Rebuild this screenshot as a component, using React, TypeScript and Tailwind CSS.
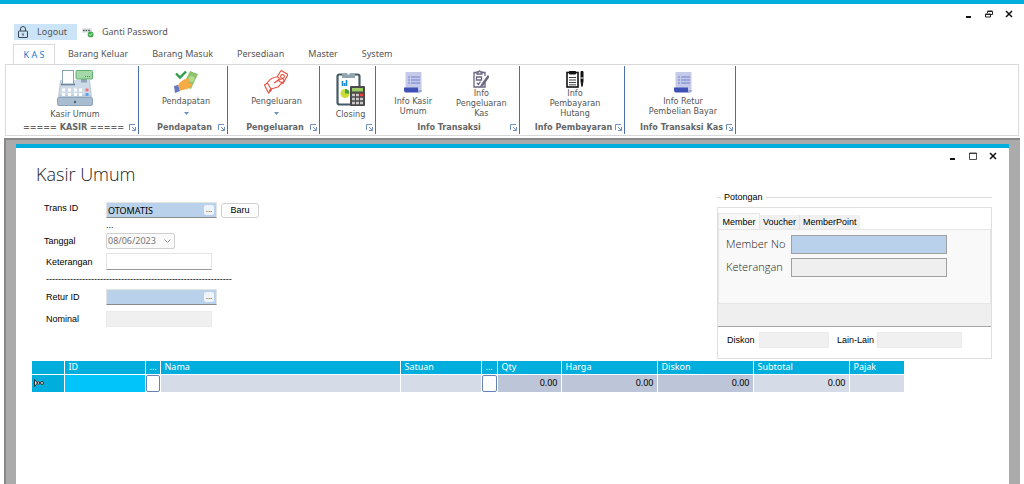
import type { ReactNode } from 'react';

const Lock = () => (
  <svg className="h-3 w-2.5" viewBox="0 0 10 12" fill="none" stroke="#3a4652">
    <path d="M2.5 5V3a2.5 2.5 0 0 1 5 0v2" />
    <rect x="0.5" y="5" width="9" height="6.5" rx="0.5" />
    <path d="M5 7.5v2" strokeWidth="1.4" />
  </svg>
);

const PasswordKey = () => (
  <svg className="h-3 w-3" viewBox="0 0 12 12">
    <rect x="0" y="2" width="10" height="5" fill="#e6e8ea" />
    <path d="M1 4.5h8" stroke="#4a4f55" strokeWidth="1.4" strokeDasharray="1.6 1" />
    <circle cx="8.6" cy="8.4" r="2.9" fill="#3faa4d" />
    <path d="m7.2 8.4 1 1 1.8-2" stroke="#fff" fill="none" strokeWidth="0.9" />
  </svg>
);

const Register = () => (
  <svg className="h-9 w-9" viewBox="0 0 36 36">
    <path d="M3 10h30l2 17H1z" fill="#b9cadb" />
    <path d="M4 10h28l1.5 15H2.5z" fill="#cddbe8" />
    <rect x="0.5" y="27.5" width="35" height="8" rx="1.5" fill="#a9bdd1" stroke="#8ea5bb" />
    <circle cx="18" cy="32" r="1.2" fill="#4d6278" />
    <rect x="24" y="9" width="6" height="3.5" fill="#8fa6bc" />
    <rect x="19" y="0.5" width="16.5" height="8.5" rx="1" fill="#a5d8a8" stroke="#5fae70" />
    <path d="M28 6.5h5" stroke="#4d8c5a" strokeDasharray="1 1" />
    <path d="M4 14.5h14" stroke="#5b7289" strokeWidth="1.6" />
    <rect x="5.5" y="0.5" width="11" height="13.5" fill="#fff" stroke="#8ba2b8" />
    <path d="M5 20h3M11 20h3M17 20h3M22 20h3M5 24.5h3M11 24.5h3M17 24.5h3M22 24.5h3" stroke="#fff" strokeWidth="2.8" />
    <path d="M28.5 20h3" stroke="#f07575" strokeWidth="2.8" />
    <path d="M28.5 24.5h3" stroke="#5a9be8" strokeWidth="2.8" />
  </svg>
);

const HandMoney = () => (
  <svg className="h-6 w-6" viewBox="0 0 24 24">
    <path d="m16 1 8 3-7 15-8-4z" fill="#8cc36c" />
    <circle cx="17.5" cy="9" r="3" fill="#b4dc8e" />
    <path d="M4 15.5c2-4 5-6 9-7 3 0 3 2 1 4l4 1c1 2-3 6-7 6l-5 1z" fill="#f7ab45" />
    <path d="m0 16 4-1 2 6-5 2z" fill="#6777c4" />
    <path d="m2 3.500 4 4 6-6" fill="none" stroke="#2fa04a" strokeWidth="2.4" />
  </svg>
);

const HandOutline = () => (
  <svg className="h-6 w-6" viewBox="0 0 24 24" fill="none" stroke="#e8503f" strokeWidth="1.1">
    <path d="m17 0.500 7 4-5 9-4-2.500M17 0.500l-4 6.500" />
    <circle cx="18.5" cy="6.500" r="1.9" />
    <path d="M3 13c3-4 6-6 10-6 3 0 3 2 0 4l-3 2M10 13l6-3.500c3-2 5 0 3 2.500l-5 5-7 2-2 2M0.500 15l3-2 4 7-3 3z" />
  </svg>
);

const Closing = () => (
  <svg className="h-9 w-[30px]" viewBox="0 0 30 36">
    <rect x="1.5" y="4.5" width="22" height="30" rx="2" fill="#fff" stroke="#455a64" strokeWidth="2.2" />
    <path d="M6 4h4a3 3 0 0 1 5 0h4v4H6z" fill="#90a4ae" />
    <circle cx="12.5" cy="3.5" r="1.2" fill="#fff" />
    <path d="M6.5 11v5M8.500 13v3M10.500 10v6" stroke="#1e88d2" strokeWidth="1.6" />
    <circle cx="9" cy="23.5" r="4.5" fill="#cddc39" />
    <path d="M9 23.5V19a4.5 4.5 0 0 1 4.5 4.5z" fill="#43a047" />
    <rect x="14" y="16" width="15" height="20" rx="1" fill="#4a4a4a" />
    <rect x="16" y="18" width="11" height="3.5" fill="#9ccc65" />
    <path d="M16 25h3M20 25h3M16 29h3M20 29h3M24 29h3M16 33h3M20 33h3M24 33h3" stroke="#c8c8c8" strokeWidth="2.4" />
    <path d="M24 25h3" stroke="#f44336" strokeWidth="2.4" />
  </svg>
);

const Scroll = () => (
  <svg className="h-[21px] w-[18px]" viewBox="0 0 18 21">
    <path d="M1.5 0h16v18h-16z" fill="#c5cae9" />
    <path d="M0 15.5h14v3q0 2 3 2H2q-2 0-2-2z" fill="#3f51b5" />
    <path d="M14 18h4q0 2.5-2 2.5t-2-2.5z" fill="#9fa8da" />
    <path d="M4 5h2M4 8h2M4 11h2M7 5h9M7 8h9M7 11h9" stroke="#7080d0" strokeWidth="1.2" />
  </svg>
);

const ClipboardEdit = () => (
  <svg className="h-[18px] w-4" viewBox="0 0 16 18" fill="none" stroke="#6a6580" strokeWidth="1.3">
    <path d="M4 2.5H1V17h11v-5M12 6V2.5H9" />
    <path d="M4 4V2h1.5q1-2 2 0H9v2z" fill="#fff" />
    <path d="M3.500 7h5v3h-5zM4 13l1.500 1.500 2-3" />
    <path d="m15 6-6 8-1 2 2-1 5.500-8z" fill="#fff" />
  </svg>
);

const ClipboardPen = () => (
  <svg className="h-[18px] w-[18px]" viewBox="0 0 18 18" fill="none" stroke="#111">
    <rect x="1" y="2.5" width="11" height="14.5" strokeWidth="1.6" />
    <path d="M3.5 1.500h6v2.500h-6z" fill="#111" />
    <path d="M3 7.500h7M3 10h7M3 12.500h7M3 14.800h7" strokeWidth="0.8" />
    <path d="M15 1.500h2v10l-1 5-1-5z" fill="#111" />
    <path d="M14.500 8h3" stroke="#fff" />
  </svg>
);

const Launcher = () => (
  <svg className="h-[7px] w-[7px]" viewBox="0 0 7 7" fill="none" stroke="#6f8fc2">
    <path d="M0.5 6V0.5H6" />
    <path d="M6.5 3v3.5H3M3 3l3 3" />
  </svg>
);

type Item = { icon: ReactNode; lines: string[]; drop?: boolean; place: string };
type Group = { label: string; width: string; items: Item[] };

const groups: Group[] = [
  { label: '===== KASIR =====', width: 'w-[133px]', items: [{ icon: <Register />, lines: ['Kasir Umum'], place: 'pt-1 gap-[3px]' }] },
  { label: 'Pendapatan', width: 'w-[89px]', items: [{ icon: <HandMoney />, lines: ['Pendapatan'], drop: true, place: 'pt-1 gap-0.5' }] },
  { label: 'Pengeluaran', width: 'w-[92px]', items: [{ icon: <HandOutline />, lines: ['Pengeluaran'], drop: true, place: 'pt-1 gap-0.5' }] },
  { label: '', width: 'w-14', items: [{ icon: <Closing />, lines: ['Closing'], place: 'pt-1 gap-[3px]' }] },
  {
    label: 'Info Transaksi',
    width: 'w-36',
    items: [
      { icon: <Scroll />, lines: ['Info Kasir', 'Umum'], place: 'pt-1.5 gap-[3px]' },
      { icon: <ClipboardEdit />, lines: ['Info', 'Pengeluaran', 'Kas'], place: 'pt-1' },
    ],
  },
  { label: 'Info Pembayaran', width: 'w-[105px]', items: [{ icon: <ClipboardPen />, lines: ['Info', 'Pembayaran', 'Hutang'], place: 'pt-1' }] },
  { label: 'Info Transaksi Kas', width: 'w-[111px]', items: [{ icon: <Scroll />, lines: ['Info Retur', 'Pembelian Bayar'], place: 'pt-1.5 gap-[3px]' }] },
];

const RibbonGroup = ({ label, width, items }: Group) => (
  <section className={`flex h-[68px] shrink-0 flex-col border-r border-[#4a6ea9] pb-px ${width}`}>
    <div className="flex h-[55px] justify-center gap-6 pl-1.5">
      {items.map((item) => (
        <button key={item.lines.join(' ')} type="button" className={`flex flex-col items-center leading-[10px] ${item.place}`}>
          {item.icon}
          <span className="flex flex-col whitespace-nowrap">
            {item.lines.map((line) => (
              <span key={line}>{line}</span>
            ))}
          </span>
          {item.drop && (
            <svg className="mt-1 h-[3px] w-[5px]" viewBox="0 0 5 3">
              <path d="M0 0h5L2.5 3z" fill="#6f8fc2" />
            </svg>
          )}
        </button>
      ))}
    </div>
    <div className="flex h-3 items-center pr-0.5">
      <h2 className="flex-1 pl-3 text-center font-bold whitespace-nowrap text-[#666]">{label}</h2>
      <button type="button" aria-label={`${label} options`}>
        <Launcher />
      </button>
    </div>
  </section>
);

const WindowButtons = ({ restored }: { restored?: boolean }) => (
  <div className="flex gap-3">
    <button type="button" aria-label="Minimize">
      <svg className="h-2 w-2" viewBox="0 0 8 8">
        <path d="M1 7h5" stroke="#111" strokeWidth="2" />
      </svg>
    </button>
    <button type="button" aria-label="Maximize">
      <svg className="h-2 w-2" viewBox="0 0 8 8" fill="none" stroke="#222">
        {restored ? (
          <path d="M2.5 3V1.5h5v3H6M0.5 4h5v3h-5zM0.5 4.500h5M2.500 1h5" />
        ) : (
          <path d="M0.5 1h7v6.5h-7zM0.5 1.5h7" strokeWidth="0.8" />
        )}
      </svg>
    </button>
    <button type="button" aria-label="Close">
      <svg className="h-2 w-2" viewBox="0 0 8 8">
        <path d="m1 1 6 6M7 1 1 7" stroke="#111" strokeWidth="1.5" />
      </svg>
    </button>
  </div>
);

const LookupField = ({ id, value }: { id: string; value: string }) => (
  <div className="flex h-4 w-[111px] items-center border border-b-[#8a8a8a] border-[#e4e4e4] bg-[#b9d1ea] pr-0.5">
    <input id={id} defaultValue={value} className="h-full w-0 flex-1 bg-transparent px-px font-['Noto_Sans',sans-serif]" />
    <button type="button" aria-label="Browse" className="h-2.5 w-2.5 rounded-xs bg-[#eef4fb] text-[8px] leading-[6px]">
      ...
    </button>
  </div>
);

const columns = [
  { title: '', width: 'w-8', value: '', cell: 'bg-[#00aede]' },
  { title: 'ID', width: 'w-[81px]', value: '', cell: 'bg-[#00c4fa]' },
  { title: '...', width: 'w-[15px]', value: 'check', cell: 'bg-white' },
  { title: 'Nama', width: 'w-60', value: '', cell: 'bg-[#d5dbe7]' },
  { title: 'Satuan', width: 'w-[81px]', value: '', cell: 'bg-[#d5dbe7]' },
  { title: '...', width: 'w-4', value: 'check', cell: 'bg-white' },
  { title: 'Qty', width: 'w-16', value: '0.00', cell: 'bg-[#bdc6d9]' },
  { title: 'Harga', width: 'w-24', value: '0.00', cell: 'bg-[#bdc6d9]' },
  { title: 'Diskon', width: 'w-24', value: '0.00', cell: 'bg-[#bdc6d9]' },
  { title: 'Subtotal', width: 'w-24', value: '0.00', cell: 'bg-[#d5dbe7]' },
  { title: 'Pajak', width: 'w-[55px]', value: '', cell: 'bg-[#d5dbe7]' },
];

const ItemTable = () => (
  <table className="w-[872px] table-fixed border-collapse font-['Noto_Sans',sans-serif] text-[9px]">
    <thead>
      <tr className="h-[13px] bg-[#00aede] text-left text-white">
        {columns.map((col, i) => (
          <th key={i} className={`overflow-hidden border-r border-b border-white p-0 pl-1 leading-3 font-normal last:border-r-0 ${col.width}`}>
            {col.title}
          </th>
        ))}
      </tr>
    </thead>
    <tbody>
      <tr className="h-[18px] text-right text-black">
        {columns.map((col, i) => (
          <td key={i} className={`border-r border-white p-0 leading-4 last:border-r-0 ${col.cell}`}>
            {i === 0 && (
              <svg className="ml-0.5 h-2 w-2.5" viewBox="0 0 10 8" fill="#ddd" stroke="#333">
                <path d="M0.5 0.500v7L3.500 4z" />
                <circle cx="4.5" cy="4" r="1.2" />
                <circle cx="8" cy="4" r="1.5" />
              </svg>
            )}
            {col.value === 'check' && (
              <input type="checkbox" aria-label="Pilih" className="block h-[17px] w-full appearance-none rounded-xs border border-[#6580b5] bg-white" />
            )}
            {col.value === '0.00' && <span className="pr-[3px]">{col.value}</span>}
          </td>
        ))}
      </tr>
    </tbody>
  </table>
);

const Potongan = () => (
  <fieldset className="w-[275px] shrink-0">
    <legend className="flex w-full items-center gap-[3px] leading-3">
      <span className="w-1 border-t border-[#dcdcdc]" />
      Potongan
      <span className="flex-1 border-t border-[#dcdcdc]" />
    </legend>
    <div className="mt-1 border border-[#dfdfdf]">
      <div className="border-b border-[#a5a5a5] pt-[5px]">
        <div role="tablist" className="flex items-end">
          <button type="button" role="tab" aria-selected="true" className="h-4 w-[42px] border border-b-0 border-[#e6e6e6] bg-[#f9f9f9]">
            Member
          </button>
          <button type="button" role="tab" aria-selected="false" className="h-3.5 w-10 border-r border-[#e2e2e2] bg-[#f0f0f0]">
            Voucher
          </button>
          <button type="button" role="tab" aria-selected="false" className="h-3.5 bg-[#f0f0f0] px-[3px]">
            MemberPoint
          </button>
        </div>
        <div role="tabpanel" className="grid h-[75px] grid-cols-[65px_156px] content-start gap-y-1 border border-[#e6e6e6] bg-[#f9f9f9] pt-[5px] pl-[7px] font-['Open_Sans',sans-serif] text-[11px] font-light text-[#222]">
          <label htmlFor="member-no" className="leading-[18px]">Member No</label>
          <input id="member-no" className="h-[19px] border border-[#a0a0a0] bg-[#b9d1ea]" />
          <label htmlFor="member-ket" className="leading-[18px]">Keterangan</label>
          <input id="member-ket" readOnly className="h-[19px] border border-[#a0a0a0] bg-[#efefef]" />
        </div>
        <div className="h-[22px] bg-[#efefef]" />
      </div>
      <div className="flex items-center pt-[5px] pb-2.5 pl-[9px] whitespace-nowrap">
        <label htmlFor="diskon" className="w-8">Diskon</label>
        <input id="diskon" readOnly className="h-4 w-[70px] border border-[#ebebeb] bg-[#f0f0f0]" />
        <label htmlFor="lain" className="ml-2 w-10">Lain-Lain</label>
        <input id="lain" readOnly className="h-4 w-[85px] border border-[#ebebeb] bg-[#f0f0f0]" />
      </div>
    </div>
  </fieldset>
);

const App = () => {
  return (
    <div className="flex min-h-screen flex-col border-t-4 border-[#00aede] bg-white font-['DejaVu_Sans_Condensed','DejaVu_Sans',sans-serif] text-[9px] leading-3 text-[#555]">
      <header className="px-[5px]">
        <div className="flex h-5 items-center justify-end pr-1.5">
          <WindowButtons restored />
        </div>
        <div className="flex gap-[5px] pl-[9px] font-['Noto_Sans',sans-serif]">
          <button type="button" className="flex h-4 w-[63px] items-center gap-[9px] bg-[#cce4f7] pl-1">
            <Lock />
            Logout
          </button>
          <button type="button" className="flex h-4 items-center gap-2">
            <PasswordKey />
            Ganti Password
          </button>
        </div>
        <nav className="mt-1 flex h-5 items-center pl-2 font-['Noto_Sans',sans-serif]">
          <a href="#kas" className="flex h-full w-[42px] items-center justify-center border border-b-0 border-[#d9d9d9] text-[#1979ca]">K A S</a>
          <div className="flex gap-6 pl-[13px]">
            <a href="#barang-keluar">Barang Keluar</a>
            <a href="#barang-masuk">Barang Masuk</a>
            <a href="#persediaan">Persediaan</a>
            <a href="#master">Master</a>
            <a href="#system">System</a>
          </div>
        </nav>
        <div className="flex h-[72px] border border-[#d9d9d9] pt-px">
          {groups.map((group) => (
            <RibbonGroup key={group.width} {...group} />
          ))}
        </div>
      </header>

      <main className="mx-1 mt-0.5 flex flex-1 flex-col border-t-2 border-l-2 border-[#888] bg-[#ababab] pt-1 pr-[11px] pl-2.5">
        <div className="flex flex-1 flex-col border-t-4 border-[#00aede] bg-white pl-4 font-['Liberation_Sans',Arial,sans-serif] text-[9px] text-black">
          <div className="flex h-[38px] items-start justify-between pt-1 pr-3 pl-1">
            <h1 className="pt-2.5 font-['Open_Sans',sans-serif] text-[18px] leading-6 font-light text-[#222]">Kasir Umum</h1>
            <WindowButtons />
          </div>
          <div className="flex items-start justify-between pt-[5px] pr-[17px]">
            <form className="grid grid-cols-[62px_auto] items-center pt-[11px] pl-3">
              <label htmlFor="trans-id" className="self-start">Trans ID</label>
              <div className="flex items-center gap-1">
                <LookupField id="trans-id" value="OTOMATIS" />
                <button type="button" className="h-[15px] w-[38px] rounded-[3px] border border-[#d0d0d0] bg-[#fdfdfd] leading-3">
                  Baru
                </button>
              </div>
              <span className="col-start-2 h-[15px] leading-[15px]">...</span>
              <label htmlFor="tanggal">Tanggal</label>
              <div className="grid w-[69px] items-center">
                <select id="tanggal" disabled className="col-start-1 row-start-1 h-4 appearance-none rounded-xs border border-[#cfcfcf] bg-[#fafafa] pl-px font-['Noto_Sans',sans-serif] text-[9px] text-[#777]">
                  <option>08/06/2023</option>
                </select>
                <svg className="col-start-1 row-start-1 mr-1 h-1 w-[7px] justify-self-end" viewBox="0 0 7 4" fill="none" stroke="#999">
                  <path d="m0.5 0.5 3 3 3-3" />
                </svg>
              </div>
              <label htmlFor="keterangan" className="mt-1 pl-0.5">Keterangan</label>
              <input id="keterangan" className="mt-1 h-[17px] w-[106px] border border-b-[#999] border-[#e4e4e4]" />
              <p className="col-span-2 h-[19px] pl-0.5 leading-[19px]">{'-'.repeat(62)}</p>
              <label htmlFor="retur-id" className="pl-0.5">Retur ID</label>
              <LookupField id="retur-id" value="" />
              <label htmlFor="nominal" className="mt-1.5 pl-0.5">Nominal</label>
              <input id="nominal" readOnly className="mt-1.5 h-4 w-[106px] border border-[#ebebeb] bg-[#f0f0f0]" />
            </form>
            <Potongan />
          </div>
          <div className="pt-0.5">
            <ItemTable />
          </div>
        </div>
      </main>
    </div>
  );
};

export default App;
